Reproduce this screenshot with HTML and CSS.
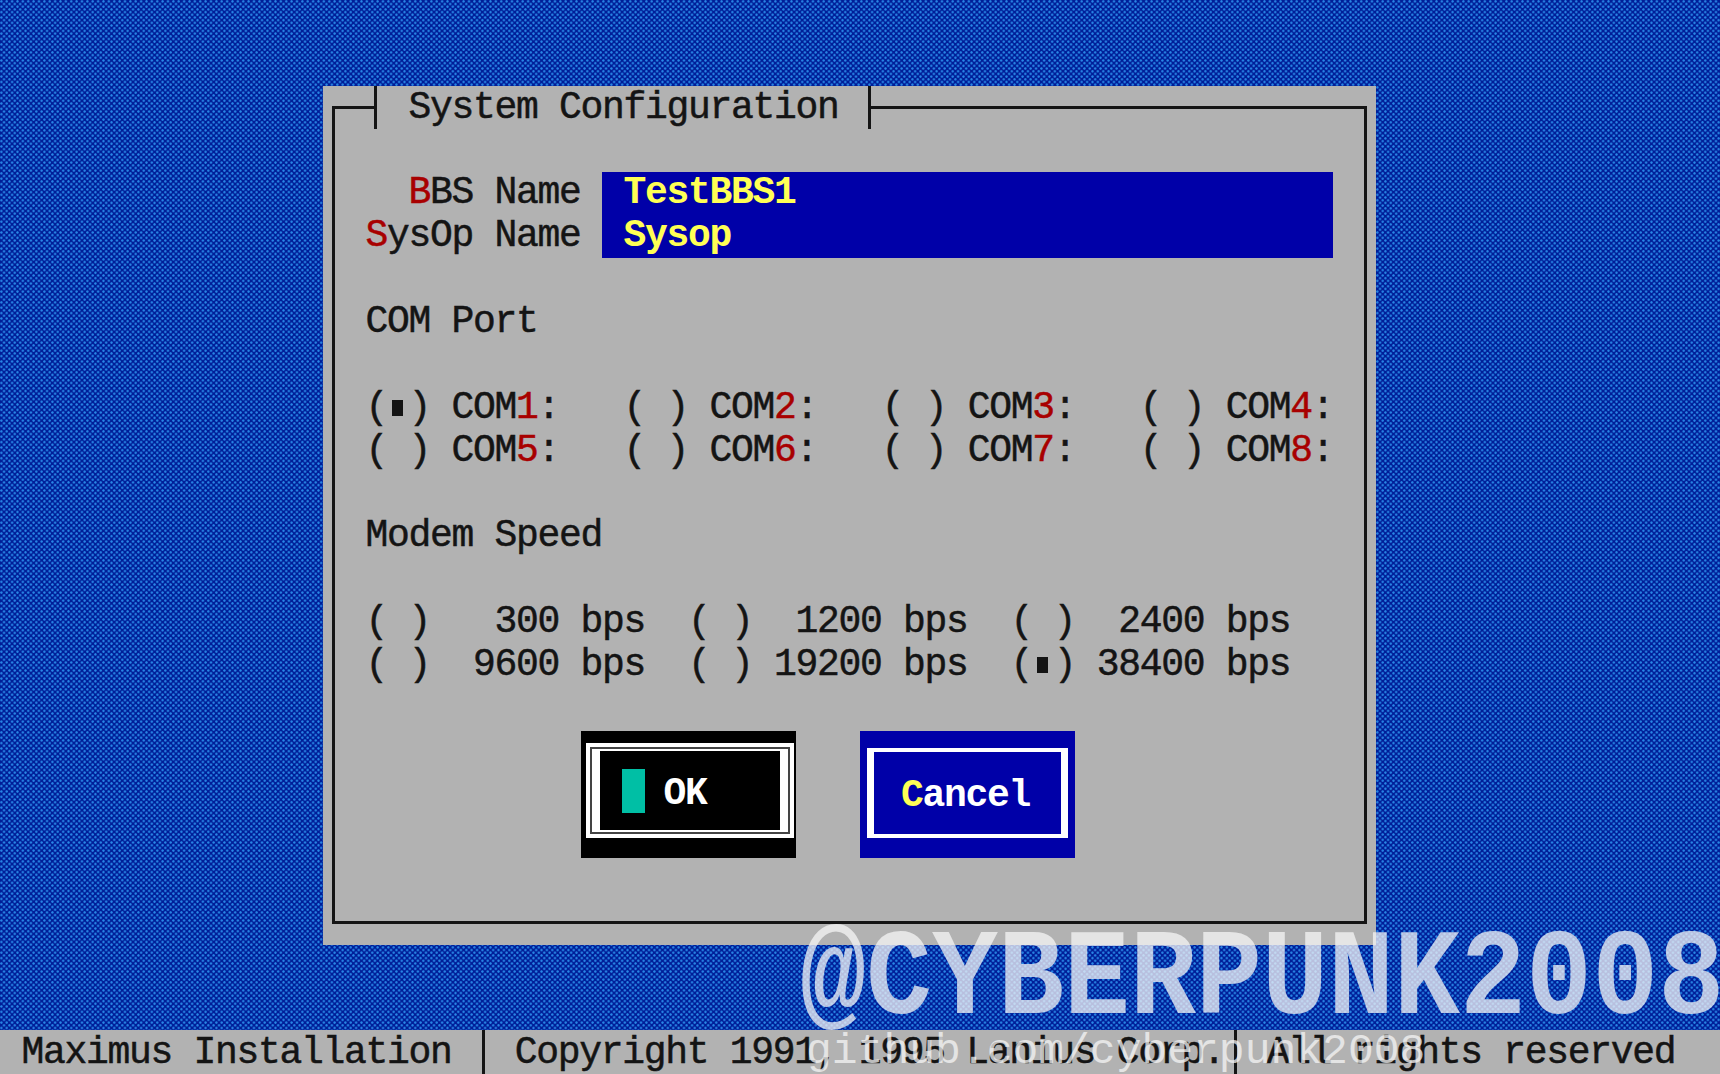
FILE: index.html
```html
<!DOCTYPE html>
<html lang="en">
<head>
    <meta charset="UTF-8">
    <title>Maximus Installation</title>
    <link rel="stylesheet" href="styles.css">
</head>
<body>
    <main class="desktop">
        <section class="dialog">
            <div class="frame"></div>
            <div class="title">System Configuration</div>
            <div class="names">
                <div class="labels">
                    <div><span class="hot">B</span>BS Name</div>
                    <div><span class="hot">S</span>ysOp Name</div>
                </div>
                <div class="field">
                    <div>TestBBS1</div>
                    <div>Sysop</div>
                </div>
            </div>
            <div class="blank"></div>
            <div class="row">COM Port</div>
            <div class="blank"></div>
            <div class="row">(<span class="dot"></span>) COM<span class="hot">1</span>:   ( ) COM<span class="hot">2</span>:   ( ) COM<span class="hot">3</span>:   ( ) COM<span class="hot">4</span>:</div>
            <div class="row">( ) COM<span class="hot">5</span>:   ( ) COM<span class="hot">6</span>:   ( ) COM<span class="hot">7</span>:   ( ) COM<span class="hot">8</span>:</div>
            <div class="blank"></div>
            <div class="row">Modem Speed</div>
            <div class="blank"></div>
            <div class="row">( )   300 bps  ( )  1200 bps  ( )  2400 bps</div>
            <div class="row">( )  9600 bps  ( ) 19200 bps  (<span class="dot"></span>) 38400 bps</div>
            <div class="blank"></div>
            <div class="buttons">
                <div class="btn btn-ok">
                    <div class="btn-outer">
                        <div class="btn-inner"><span class="cursor"></span><span class="btn-text">OK</span></div>
                    </div>
                </div>
                <div class="btn btn-cancel">
                    <div class="btn-box"><span class="pick">C</span>ancel</div>
                </div>
            </div>
        </section>
    </main>

    <footer class="status">
        <div class="status-a">Maximus Installation</div>
        <div class="status-b">Copyright 1991, 1995 Lanius Corp.</div>
        <div class="status-c">All rights reserved</div>
    </footer>

    <div class="mark-big">@CYBERPUNK2008</div>
    <div class="mark-small">github.com/cyberpunk2008</div>
</body>
</html>
```

FILE: styles.css
```css
:root {
    --cw: 21.5px;
    --rh: 42.96px;
    --grey: #b2b2b2;
    --navy: #0000a8;
    --ink: #141414;
}

* {
    box-sizing: border-box;
}

html,
body {
    margin: 0;
    padding: 0;
    height: 1074px;
    overflow: hidden;
}

body {
    position: relative;
    display: flex;
    flex-direction: column;
    font-family: 'Liberation Mono', monospace;
    font-size: 38px;
    letter-spacing: -1.3px;
    line-height: var(--rh);
    color: var(--ink);
    -webkit-text-stroke: 0.5px currentColor;
    background-color: #001e98;
    background-image:
        radial-gradient(circle at 1.35px 1.35px, #2a8ae8 0, #2a8ae8 0.8px, transparent 1.5px),
        radial-gradient(circle at 4.03px 4.03px, #2a8ae8 0, #2a8ae8 0.8px, transparent 1.5px);
    background-size: 5.375px 5.375px;
}

.title,
.labels div,
.field div,
.row,
.btn-box,
.status div {
    white-space: pre;
}

.desktop {
    flex: 1;
    padding: calc(var(--rh) * 2) 0 0 calc(var(--cw) * 15);
}

.dialog {
    position: relative;
    width: calc(var(--cw) * 49);
    height: calc(var(--rh) * 20);
    padding-left: calc(var(--cw) * 2);
    background: var(--grey);
}

.frame {
    position: absolute;
    left: 9px;
    right: 9px;
    top: 20px;
    bottom: 21px;
    border: 3px solid var(--ink);
}

.title {
    position: relative;
    width: calc(var(--cw) * 23 + 3px);
    height: 43px;
    margin: 0 0 calc(var(--rh) * 2 - 43px) 8px;
    padding-left: calc(var(--cw) * 2 - 11px);
    background: var(--grey);
    border-left: 3px solid var(--ink);
    border-right: 3px solid var(--ink);
    line-height: 43px;
}

.blank,
.row {
    height: var(--rh);
}

.names {
    display: flex;
    height: calc(var(--rh) * 2);
}

.labels {
    width: calc(var(--cw) * 10);
    text-align: right;
}

.hot {
    color: #a80000;
}

.field {
    width: calc(var(--cw) * 34);
    margin-left: var(--cw);
    padding-left: var(--cw);
    background: var(--navy);
    color: #ffff55;
    font-weight: bold;
    -webkit-text-stroke: 0;
}

.dot {
    display: inline-block;
    width: var(--cw);
    height: 18px;
    background: linear-gradient(var(--ink), var(--ink)) center / 11px 16px no-repeat;
    vertical-align: 1px;
}

.buttons {
    display: flex;
    gap: calc(var(--cw) * 3);
    margin-left: calc(var(--cw) * 10);
    margin-top: 1px;
}

.btn {
    width: calc(var(--cw) * 10);
    height: 127px;
    color: #fff;
    font-weight: bold;
    -webkit-text-stroke: 0;
}

.btn-ok {
    padding: 12px 2px 20px 5px;
    background: #000;
}

.btn-outer {
    height: 95px;
    padding: 8px 14px;
    background: #fff;
    box-shadow: inset 0 0 0 4px #fff, inset 0 0 0 6px #444;
}

.btn-inner {
    display: flex;
    align-items: center;
    height: 100%;
    padding-left: 22px;
    background: #000;
}

.cursor {
    width: 23px;
    height: 44px;
    margin-right: 19px;
    background: #00bfa5;
}

.btn-text {
    padding-top: 6px;
    line-height: 44px;
}

.btn-cancel {
    padding: 17px 7px 20px 7px;
    background: var(--navy);
}

.btn-box {
    height: 90px;
    padding-left: 27px;
    border: solid #fff;
    border-width: 4px 7px;
    line-height: 88px;
}

.pick {
    color: #ffff55;
}

.status {
    display: flex;
    height: 44px;
    background: var(--grey);
}

.status div {
    line-height: 46px;
}

.status-a {
    width: calc(var(--cw) * 22.5 + 1px);
    padding-left: var(--cw);
    border-right: 3px solid var(--ink);
}

.status-b {
    width: 752px;
    padding-left: 30px;
    border-right: 3px solid var(--ink);
}

.status-c {
    padding-left: 30px;
}

.mark-big {
    position: absolute;
    left: 800px;
    top: 916px;
    font-size: 110px;
    letter-spacing: 0;
    line-height: 130px;
    font-weight: bold;
    white-space: pre;
    color: rgba(245, 245, 245, 0.75);
    -webkit-text-stroke: 0;
    transform: scaleY(1.12);
}

.mark-small {
    position: absolute;
    left: 806px;
    top: 1029px;
    font-size: 43px;
    letter-spacing: 0;
    line-height: 45px;
    white-space: pre;
    color: rgba(245, 245, 245, 0.75);
    -webkit-text-stroke: 0;
}
```
